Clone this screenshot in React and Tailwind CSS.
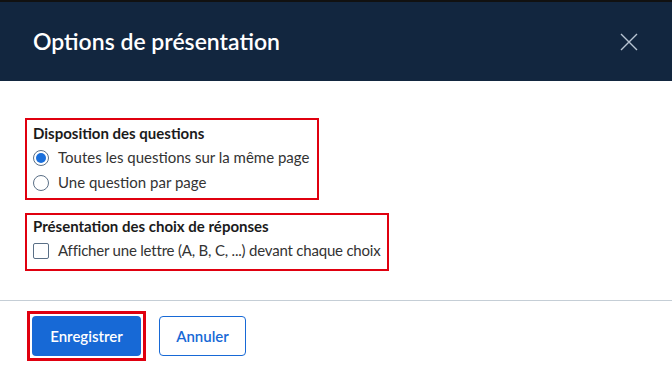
export default function App() {
  const font = { fontFamily: "Lato, 'Liberation Sans', sans-serif" };
  return (
    <div className="w-[672px] h-[380px] bg-white overflow-hidden" style={font}>
      <div className="h-[2px] bg-[#111111]" />
      <div className="h-[79px] bg-[#12263f] flex items-center justify-between pl-[33px] pr-[34px]">
        <h1 className="text-[23px] font-semibold text-white leading-none">Options de présentation</h1>
        <svg width="18" height="18" viewBox="0 0 18 18" className="text-[#b8c4d2]">
          <path d="M1 1L17 17M17 1L1 17" stroke="currentColor" strokeWidth="1.4" />
        </svg>
      </div>
      <div className="pt-[37px] pl-[25px] h-[219px] flex flex-col items-start">
        <div className="border-2 border-[#e0000f] w-[294px] h-[82px] pl-[6px]">
          <div className="text-[15px] font-bold text-[#1b1b1b] leading-[24px] mt-[1px]">Disposition des questions</div>
          <label className="flex items-center gap-[9px] h-[25px] text-[15px] text-[#333] whitespace-nowrap">
            <span className="w-[16px] h-[16px] shrink-0 rounded-full border border-[#5a6f86] flex items-center justify-center">
              <span className="w-[10px] h-[10px] rounded-full bg-[#1a6fdb]" />
            </span>
            Toutes les questions sur la même page
          </label>
          <label className="flex items-center gap-[9px] h-[25px] text-[15px] text-[#333] whitespace-nowrap">
            <span className="w-[16px] h-[16px] shrink-0 rounded-full border border-[#5a6f86]" />
            Une question par page
          </label>
        </div>
        <div className="border-2 border-[#e0000f] w-[364px] h-[58px] pl-[6px] mt-[13px]">
          <div className="text-[15px] font-bold text-[#1b1b1b] leading-[22px]">Présentation des choix de réponses</div>
          <label className="flex items-center gap-[9px] h-[27px] text-[15px] text-[#333] whitespace-nowrap tracking-[-0.2px]">
            <span className="w-[16px] h-[16px] shrink-0 rounded-[2px] border border-[#5a6f86]" />
            Afficher une lettre (A, B, C, ...) devant chaque choix
          </label>
        </div>
      </div>
      <div className="h-px bg-[#c5ced6]" />
      <div className="flex items-center gap-[13px] pl-[27px] pt-[10px]">
        <div className="border-[3px] border-[#e0000f] p-[2px]">
          <button className="w-[109px] h-[40px] rounded-[4px] bg-[#1769d6] text-white text-[15px] font-semibold">Enregistrer</button>
        </div>
        <button className="w-[87px] h-[40px] rounded-[4px] border border-[#1769d6] text-[#1769d6] text-[15px] font-semibold bg-white">Annuler</button>
      </div>
    </div>
  );
}
